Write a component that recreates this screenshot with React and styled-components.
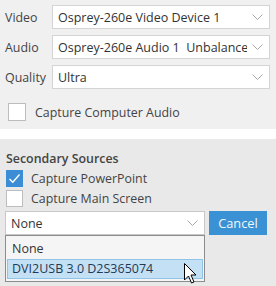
import React from "react";
import styled, { createGlobalStyle } from "styled-components";

const Global = createGlobalStyle`
  html, body { margin: 0; padding: 0; background: #e9e9e9; }
  body { font-family: "Open Sans", "Noto Sans", sans-serif; color: #333; }
  * { box-sizing: border-box; }
`;

const Page = styled.div`
  width: 276px;
  height: 286px;
  overflow: hidden;
  position: relative;
`;

const TopPanel = styled.div`
  background: #f0f0f0;
  padding: 5px 6px 6px 5px;
  display: flex;
  flex-direction: column;
  gap: 6px;
`;

const FieldRow = styled.div`
  display: grid;
  grid-template-columns: 47px minmax(0, 1fr);
  align-items: center;
  height: 24px;
`;

const Label = styled.span`
  font-size: 12.4px;
  color: #444;
`;

const SelectBox = styled.div`
  position: relative;
  min-width: 0;
  height: 24px;
  background: #fff;
  border: 1px solid ${p => (p.$open ? "#c8c8c8" : "#d4d4d4")};
  display: flex;
  align-items: center;
  padding: 0 22px 0 5px;
  font-size: 12.5px;
  color: #333;
`;

const SelectText = styled.span`
  white-space: pre;
  overflow: hidden;
  flex: 1;
  min-width: 0;
`;

const Chevron = styled.svg`
  position: absolute;
  right: 6px;
  top: 50%;
  margin-top: -3px;
  width: 11px;
  height: 6px;
`;

const CheckRow = styled.div`
  display: flex;
  align-items: center;
  gap: ${p => p.$gap || 9}px;
  height: ${p => p.$h || 17}px;
  padding-left: ${p => p.$pl || 0}px;
  font-size: 12.4px;
  color: #444;
`;

const Box = styled.div`
  width: ${p => p.$s}px;
  height: ${p => p.$s}px;
  flex: none;
  border: 1px solid ${p => (p.$checked ? "#3b8ed6" : "#bdbdbd")};
  background: ${p => (p.$checked ? "#3b8ed6" : "#fff")};
  display: flex;
  align-items: center;
  justify-content: center;
`;

const Stripe = styled.div`
  height: 10px;
  background: #fff;
`;

const BottomPanel = styled.div`
  background: #e9e9e9;
  padding: 11px 6px 0 6px;
  display: flex;
  flex-direction: column;
`;

const Heading = styled.div`
  font-size: 12.4px;
  font-weight: 600;
  color: #444;
  height: 20px;
  line-height: 18px;
`;

const Checks = styled.div`
  display: flex;
  flex-direction: column;
  gap: 3px;
`;

const ActionRow = styled.div`
  display: flex;
  align-items: flex-start;
  gap: 4px;
  margin-top: 4px;
  margin-left: -1px;
`;

const SelectWrap = styled.div`
  position: relative;
  width: 200px;
`;

const CancelButton = styled.button`
  width: 58px;
  height: 24px;
  border: none;
  background: #3a92d4;
  color: #f2f7fb;
  font-family: inherit;
  font-size: 12.8px;
  padding: 0;
`;

const DropList = styled.div`
  position: absolute;
  left: 0;
  top: 24px;
  width: 200px;
  height: 47px;
  background: #f5f5f5;
  border: 1px solid #8c8c8c;
  padding: 3px 1px 0 1px;
`;

const Item = styled.div`
  height: 20px;
  line-height: 18px;
  padding-left: 4px;
  font-size: 12.5px;
  color: ${p => (p.$active ? "#1e3a56" : "#333")};
  background: ${p => (p.$active ? "#c4e0f4" : "transparent")};
  border: 1px solid ${p => (p.$active ? "#8fc3e8" : "transparent")};
`;

const Cursor = styled.svg`
  position: absolute;
  left: 184px;
  top: 263px;
  width: 13px;
  height: 22px;
`;

const ChevronIcon = () => (
  <Chevron viewBox="0 0 11 6">
    <path d="M0.5 0.5 L5.5 5.5 L10.5 0.5" fill="none" stroke="#a8a8a8" strokeWidth="1" />
  </Chevron>
);

const CheckMark = () => (
  <svg width="13" height="11" viewBox="0 0 13 11">
    <path d="M1.5 6 L4.8 9.2 L11.5 1.5" fill="none" stroke="#fff" strokeWidth="1.4" />
  </svg>
);

const Select = ({ value, open }) => (
  <SelectBox $open={open}>
    <SelectText>{value}</SelectText>
    <ChevronIcon />
  </SelectBox>
);

export default function App() {
  return (
    <>
      <Global />
      <Page>
        <TopPanel>
          <FieldRow>
            <Label>Video</Label>
            <Select value="Osprey-260e Video Device 1" />
          </FieldRow>
          <FieldRow>
            <Label>Audio</Label>
            <Select value="Osprey-260e Audio 1  Unbalanced" />
          </FieldRow>
          <FieldRow>
            <Label>Quality</Label>
            <Select value="Ultra" />
          </FieldRow>
          <CheckRow $pl={3} $gap={9} $h={22} style={{ marginTop: 6 }}>
            <Box $s={18} />
            Capture Computer Audio
          </CheckRow>
        </TopPanel>
        <Stripe />
        <BottomPanel>
          <Heading>Secondary Sources</Heading>
          <Checks>
            <CheckRow $gap={8}>
              <Box $s={17} $checked><CheckMark /></Box>
              Capture PowerPoint
            </CheckRow>
            <CheckRow $gap={8}>
              <Box $s={17} />
              Capture Main Screen
            </CheckRow>
          </Checks>
          <ActionRow>
            <SelectWrap>
              <Select value="None" open />
              <DropList>
                <Item>None</Item>
                <Item $active>DVI2USB 3.0 D2S365074</Item>
              </DropList>
            </SelectWrap>
            <CancelButton>Cancel</CancelButton>
          </ActionRow>
        </BottomPanel>
        <Cursor viewBox="0 0 13 22">
          <path d="M0.5 0.5 L0.5 17 L4.5 13 L7.5 20 L10 19 L7 12 L12 12 Z" fill="#fff" stroke="#000" strokeWidth="1" strokeLinejoin="miter" />
        </Cursor>
      </Page>
    </>
  );
}
